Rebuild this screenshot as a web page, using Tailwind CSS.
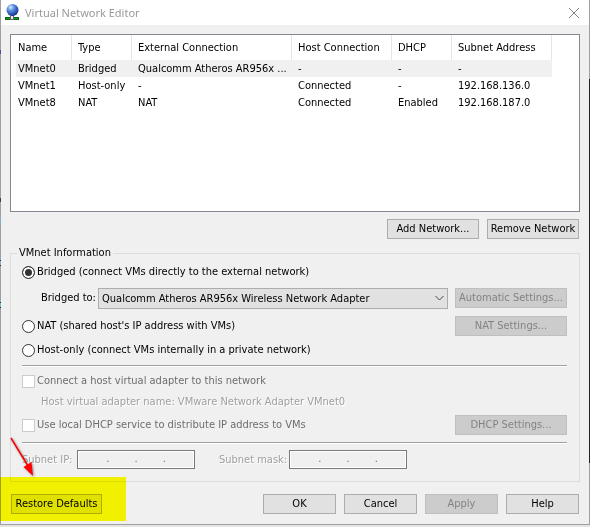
<!DOCTYPE html>
<html lang="en">
<head>
    <meta charset="UTF-8">
    <meta name="viewport" content="width=device-width, initial-scale=1.0">
    <title>Virtual Network Editor</title>
    <script src="https://cdn.jsdelivr.net/npm/@tailwindcss/browser@4"></script>
</head>
<body class="bg-[#e4e4e4] text-black text-[11px] leading-4 font-['DejaVu_Sans_Condensed','DejaVu_Sans',sans-serif]">
    <main class="relative bg-[#f0f0f0] border-x border-b border-[#a0a0a0]">
        <!-- Title bar -->
        <header class="flex items-center h-[25px] bg-white pl-1 pr-[9px]">
            <svg class="w-4 h-5" viewBox="0 0 16 20" aria-hidden="true">
                <defs>
                    <radialGradient id="globe" cx="35%" cy="28%" r="75%">
                        <stop offset="0" stop-color="#d4e8ff"/>
                        <stop offset="0.4" stop-color="#5a8be0"/>
                        <stop offset="1" stop-color="#10308c"/>
                    </radialGradient>
                </defs>
                <rect x="0.500" y="14.500" width="13" height="2" fill="#10a018" stroke="#0a6010"/>
                <rect x="5.500" y="12.500" width="3" height="4" fill="#e8e8e8" stroke="#666"/>
                <circle cx="7.500" cy="7" r="6" fill="url(#globe)"/>
            </svg>
            <h1 class="ml-1 text-[11px] text-[#999] font-['Noto_Sans','Open_Sans',sans-serif]">Virtual Network Editor</h1>
            <button type="button" aria-label="Close" class="ml-auto">
                <svg class="w-3 h-3" viewBox="0 0 12 12" fill="none" stroke="#888"><path d="M1 1l10 10M11 1L1 11"/></svg>
            </button>
        </header>

        <div class="px-[9px] pt-[9px] pb-[10px]">
            <!-- Network list -->
            <div class="h-[178px] border border-[#828790] bg-white pl-[5px] pr-[27px] overflow-hidden">
                <table class="w-full table-fixed border-separate border-spacing-0 text-left whitespace-nowrap">
                    <colgroup>
                        <col class="w-[56px]">
                        <col class="w-[60px]">
                        <col class="w-[160px]">
                        <col class="w-[100px]">
                        <col class="w-[60px]">
                        <col>
                    </colgroup>
                    <thead>
                        <tr class="h-[25px] *:font-normal *:pl-[6px] *:border-r *:border-[#e5e5e5]">
                            <th class="pl-[2px]!">Name</th>
                            <th>Type</th>
                            <th>External Connection</th>
                            <th>Host Connection</th>
                            <th>DHCP</th>
                            <th>Subnet Address</th>
                        </tr>
                    </thead>
                    <tbody>
                        <tr class="h-[17px] bg-[#f0f0f0] *:pl-[6px]">
                            <td class="pl-[2px]!">VMnet0</td><td>Bridged</td><td>Qualcomm Atheros AR956x ...</td><td>-</td><td>-</td><td>-</td>
                        </tr>
                        <tr class="h-[17px] *:pl-[6px]">
                            <td class="pl-[2px]!">VMnet1</td><td>Host-only</td><td>-</td><td>Connected</td><td>-</td><td>192.168.136.0</td>
                        </tr>
                        <tr class="h-[17px] *:pl-[6px]">
                            <td class="pl-[2px]!">VMnet8</td><td>NAT</td><td>NAT</td><td>Connected</td><td>Enabled</td><td>192.168.187.0</td>
                        </tr>
                    </tbody>
                </table>
            </div>
            <div class="mt-[7px] flex justify-end gap-2 pr-px">
                <button type="button" class="w-[92px] h-5 border border-[#adadad] bg-[#e1e1e1] whitespace-nowrap">Add Network...</button>
                <button type="button" class="w-[92px] h-5 border border-[#adadad] bg-[#e1e1e1] whitespace-nowrap">Remove Network</button>
            </div>

            <!-- Settings of the selected network -->
            <fieldset class="mt-[6px] border border-[#dcdcdc] pl-[11px] pr-3 pb-3 pt-px">
                <legend class="-ml-[5px] px-[2px]">VMnet Information</legend>
                <label class="flex items-center gap-[2px] h-5">
                    <input type="radio" name="mode" checked class="appearance-none size-[13px] rounded-full border border-[#333] bg-white checked:bg-[#333] checked:shadow-[inset_0_0_0_2px_white]">
                    Bridged (connect VMs directly to the external network)
                </label>
                <div class="mt-[6px] flex h-[21px]">
                    <label for="adapter" class="w-[76px] pl-[19px] leading-5 whitespace-nowrap">Bridged to:</label>
                    <div class="relative flex-1">
                        <select id="adapter" class="appearance-none w-full h-[21px] border border-[#adadad] bg-[#e1e1e1] pl-[3px]">
                            <option>Qualcomm Atheros AR956x Wireless Network Adapter</option>
                        </select>
                        <svg class="absolute right-1 top-[7px] w-[9px] h-[7px] pointer-events-none" viewBox="0 0 9 7" fill="none" stroke="#444"><path d="M.5 1l4 4 4-4"/></svg>
                    </div>
                    <button type="button" disabled class="ml-[7px] w-28 h-5 border border-[#bfbfbf] bg-[#ccc] text-[#838383] whitespace-nowrap">Automatic Settings...</button>
                </div>
                <div class="mt-[7px] flex justify-between">
                    <label class="flex items-center gap-[2px] h-5">
                        <input type="radio" name="mode" class="appearance-none size-[13px] rounded-full border border-[#333] bg-white checked:bg-[#333] checked:shadow-[inset_0_0_0_2px_white]">
                        NAT (shared host's IP address with VMs)
                    </label>
                    <button type="button" disabled class="w-28 h-5 border border-[#bfbfbf] bg-[#ccc] text-[#838383]">NAT Settings...</button>
                </div>
                <label class="mt-1 flex items-center gap-[2px] h-5">
                    <input type="radio" name="mode" class="appearance-none size-[13px] rounded-full border border-[#333] bg-white checked:bg-[#333] checked:shadow-[inset_0_0_0_2px_white]">
                    Host-only (connect VMs internally in a private network)
                </label>
                <hr class="mt-[5px] border-t-[#a0a0a0] border-b border-b-white">
                <label class="mt-1 flex items-center gap-[2px] h-5 text-[#6d6d6d]">
                    <input type="checkbox" disabled class="appearance-none size-[13px] border border-[#ccc] bg-white">
                    Connect a host virtual adapter to this network
                </label>
                <p class="mt-px pl-[19px] leading-5 text-[#a0a0a0] text-shadow-[1px_1px_0_white]">Host virtual adapter name: VMware Network Adapter VMnet0</p>
                <div class="mt-[3px] flex justify-between">
                    <label class="flex items-center gap-[2px] h-5 text-[#6d6d6d]">
                        <input type="checkbox" disabled class="appearance-none size-[13px] border border-[#ccc] bg-white">
                        Use local DHCP service to distribute IP address to VMs
                    </label>
                    <button type="button" disabled class="w-28 h-5 border border-[#bfbfbf] bg-[#ccc] text-[#838383]">DHCP Settings...</button>
                </div>
                <hr class="mt-[7px] border-t-[#a0a0a0] border-b border-b-white">
                <div class="mt-[6px] flex items-center text-[#a0a0a0]">
                    <span id="subnet-ip" class="w-[55px] whitespace-nowrap text-shadow-[1px_1px_0_white]">Subnet IP:</span>
                    <div role="group" aria-labelledby="subnet-ip" class="flex w-[118px] h-[19px] px-[3px] border border-[#7a7a7a] ring-1 ring-inset ring-white text-[#6d6d6d]">
                        <input disabled aria-label="Octet 1" class="w-0 flex-1">.<input disabled aria-label="Octet 2" class="w-0 flex-1">.<input disabled aria-label="Octet 3" class="w-0 flex-1">.<input disabled aria-label="Octet 4" class="w-0 flex-1">
                    </div>
                    <span id="subnet-mask" class="ml-6 w-[70px] whitespace-nowrap text-shadow-[1px_1px_0_white]">Subnet mask:</span>
                    <div role="group" aria-labelledby="subnet-mask" class="flex w-[118px] h-[19px] px-[3px] border border-[#7a7a7a] ring-1 ring-inset ring-white text-[#6d6d6d]">
                        <input disabled aria-label="Octet 1" class="w-0 flex-1">.<input disabled aria-label="Octet 2" class="w-0 flex-1">.<input disabled aria-label="Octet 3" class="w-0 flex-1">.<input disabled aria-label="Octet 4" class="w-0 flex-1">
                    </div>
                </div>
            </fieldset>

            <footer class="mt-3 flex gap-2 px-px">
                <button type="button" class="mr-auto w-[91px] h-5 border border-[#adadad] bg-[#e1e1e1] whitespace-nowrap">Restore Defaults</button>
                <button type="button" class="w-[73px] h-5 border border-[#adadad] bg-[#e1e1e1]">OK</button>
                <button type="button" class="w-[73px] h-5 border border-[#adadad] bg-[#e1e1e1]">Cancel</button>
                <button type="button" disabled class="w-[73px] h-5 border border-[#bfbfbf] bg-[#ccc] text-[#838383]">Apply</button>
                <button type="button" class="w-[73px] h-5 border border-[#adadad] bg-[#e1e1e1]">Help</button>
            </footer>
        </div>

        <!-- Slivers of the desktop behind the window -->
        <div class="absolute -right-px top-[79px] bottom-[61px] w-px bg-[#222]"></div>
        <svg class="absolute -left-px top-0 w-px h-[320px]" viewBox="0 0 1 320" aria-hidden="true">
            <path d="M0 50h1v4h-1z" fill="#5a4a8c"/>
            <path d="M0 198h1v4h-1z" fill="#5a2a50"/>
            <path d="M0 218h1v6h-1zM0 258h1v7h-1zM0 300h1v7h-1z" fill="#7fb0c4"/>
            <path d="M0 260h1v1h-1zM0 265h1v1h-1zM0 302h1v1h-1zM0 307h1v1h-1z" fill="#333"/>
        </svg>

        <!-- Marker and arrow pointing at Restore Defaults -->
        <div class="absolute -left-px bottom-[3px] w-[126px] h-[44px] bg-[#ffff00] mix-blend-multiply pointer-events-none"></div>
        <svg class="absolute left-[8px] bottom-[44px] w-7 h-[44px] pointer-events-none drop-shadow-[1px_1px_1px_rgba(0,0,0,0.4)]" viewBox="0 0 28 44">
            <path d="M2 2L19 30" stroke="#f00" stroke-width="1.5"/>
            <path d="M24 40L14.500 31L22.500 26Z" fill="#f00"/>
        </svg>
    </main>
</body>
</html>
